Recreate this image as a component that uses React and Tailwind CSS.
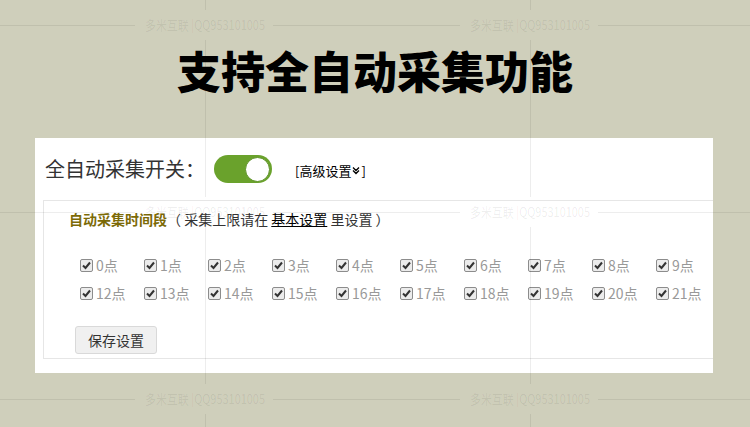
import React from 'react';

const hours1 = [0, 1, 2, 3, 4, 5, 6, 7, 8, 9];
const hours2 = [12, 13, 14, 15, 16, 17, 18, 19, 20, 21];

// 背景水印（线条 + 文字）
function Watermark() {
  const rows = [25, 212, 399];
  const cols = [-122, 205, 530, 857];
  const vlines = [205, 530];
  const line = 'rgba(0,0,0,0.07)';
  return (
    <svg className="absolute inset-0 pointer-events-none" width="750" height="427">
      {rows.map((y) =>
        cols.slice(0, -1).map((cx, i) => (
          <line key={`h${y}-${i}`} x1={cx + 68} y1={y + 0.5} x2={cols[i + 1] - 70} y2={y + 0.5} stroke={line} />
        ))
      )}
      {vlines.map((x) => {
        const stops = [-20, ...rows, 447];
        return stops.slice(0, -1).map((y, i) => (
          <line key={`v${x}-${i}`} x1={x + 0.5} y1={y === -20 ? 0 : y + 15} x2={x + 0.5} y2={stops[i + 1] - 15} stroke={line} />
        ));
      })}
      {rows.map((y) =>
        vlines.map((cx) => (
          <text
            key={`t${y}-${cx}`}
            x={cx}
            y={y + 5}
            fontSize="13"
            textAnchor="middle"
            textLength="120"
            lengthAdjust="spacingAndGlyphs"
            fill="rgba(0,0,0,0.08)"
            fontFamily="Noto Sans CJK SC, sans-serif"
          >
            多米互联 |QQ953101005
          </text>
        ))
      )}
    </svg>
  );
}

const Check = ({ label }) => (
  <label className="w-[64px] flex items-center gap-[3px] h-[28px]">
    <span className="w-[13px] h-[13px] border border-[#8c8c8c] rounded-[2px] bg-[#ececec] flex items-center justify-center">
      <svg width="11" height="11" viewBox="0 0 11 11">
        <path d="M2 5.5 L4.5 8 L9 2.5" fill="none" stroke="#333" strokeWidth="2" />
      </svg>
    </span>
    <span className="text-[14px] text-[#999]">{label}点</span>
  </label>
);

export default function App() {
  return (
    <div className="relative w-[750px] h-[427px] overflow-hidden bg-[#cfcfbb] font-['Noto_Sans_CJK_SC',sans-serif]">
      <h1 className="pt-[48px] text-center text-[44px] leading-none font-black text-black">支持全自动采集功能</h1>

      <div className="mt-[46px] ml-[35px] w-[678px] h-[235px] bg-white overflow-hidden">
        {/* 开关行 */}
        <div className="flex items-center pt-[17px] pl-[10px] h-[45px]">
          <span className="text-[20px] leading-[28px] text-[#333]">全自动采集开关：</span>
          <button className="ml-[9px] w-[58px] h-[28px] rounded-full bg-[#6aa22c] flex items-center justify-end pr-[2px]">
            <span className="w-[25px] h-[25px] rounded-full bg-white border border-[#5d9226]" />
          </button>
          <span className="ml-[23px] mt-[3px] text-[13px] text-black flex items-center">
            [高级设置
            <svg width="8" height="9" viewBox="0 0 8 9" className="mx-[1px]">
              <path d="M1 1.5 L4 4.5 L7 1.5 M1 4.5 L4 7.5 L7 4.5" fill="none" stroke="#000" strokeWidth="1.3" />
            </svg>
            ]
          </span>
        </div>

        {/* 时间段设置 */}
        <div className="mt-[17px] ml-[8px] w-[700px] h-[159px] border border-[#e6e6e6]">
          <div className="pt-[9px] pl-[25px] text-[14px] leading-[18px] text-[#333]">
            <span className="font-bold text-[#7c6a06]">自动采集时间段</span>
            <span>（ 采集上限请在 </span>
            <a className="underline text-black">基本设置</a>
            <span> 里设置 ）</span>
          </div>
          <div className="mt-[23px] pl-[36px]">
            <div className="flex">
              {hours1.map((h) => (
                <Check key={h} label={h} />
              ))}
            </div>
            <div className="flex">
              {hours2.map((h) => (
                <Check key={h} label={h} />
              ))}
            </div>
          </div>
          <button className="mt-[19px] ml-[31px] w-[82px] h-[28px] bg-[#f0f0f0] border border-[#d9d9d9] rounded-[3px] text-[14px] text-[#333]">
            保存设置
          </button>
        </div>
      </div>

      <Watermark />
    </div>
  );
}
